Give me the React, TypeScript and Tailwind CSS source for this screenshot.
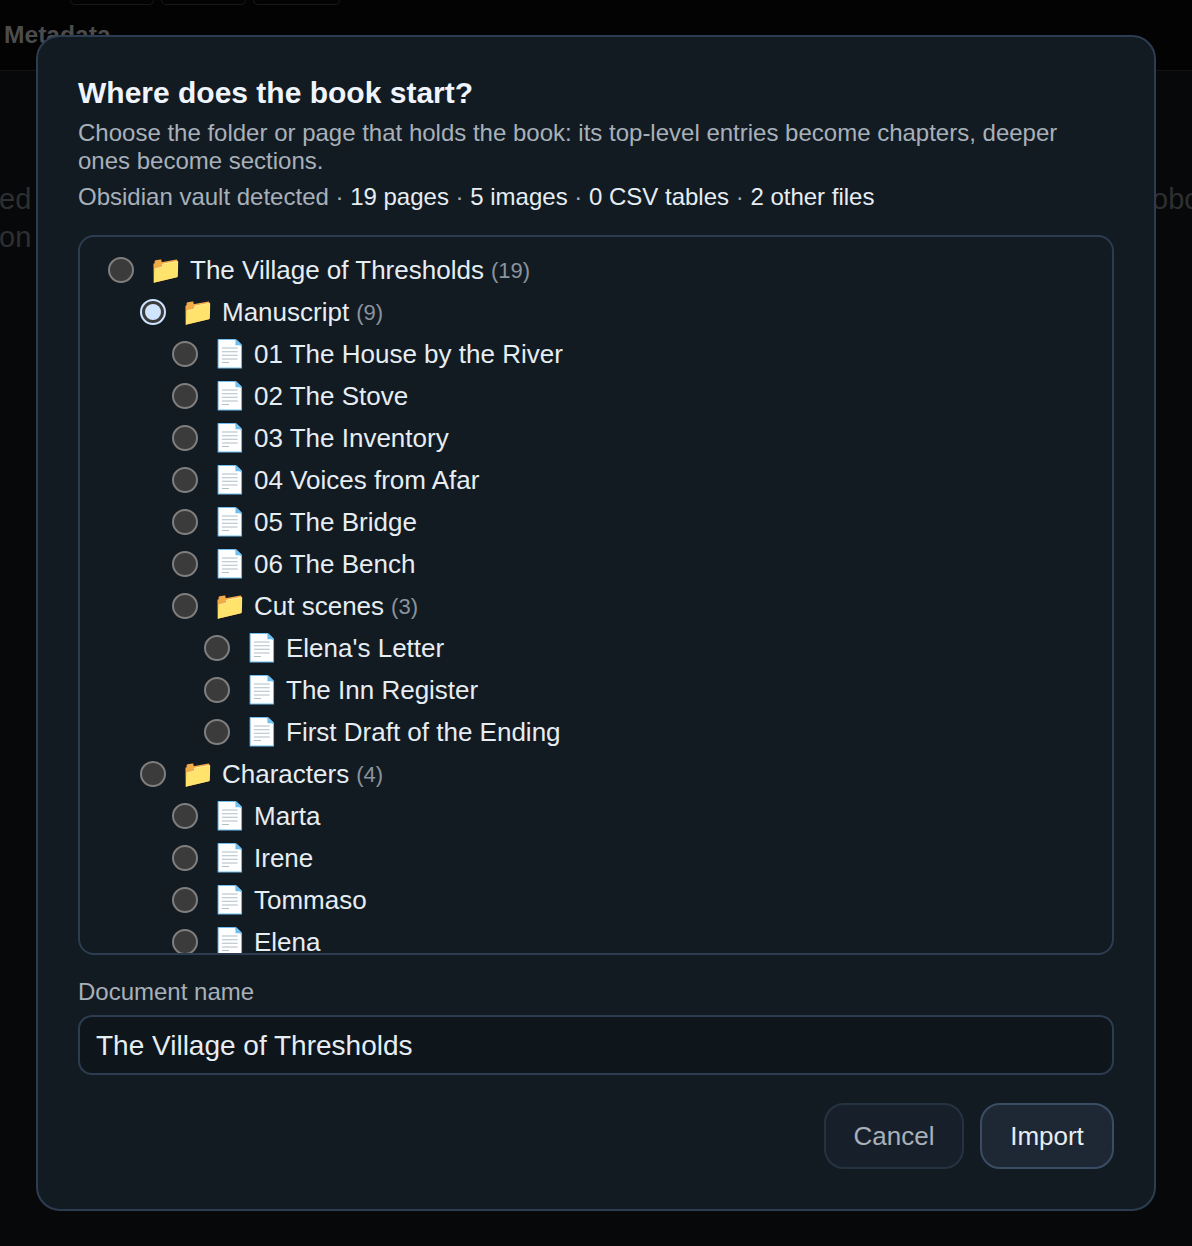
type Node = {
  name: string;
  depth: number;
  folder?: boolean;
  count?: number;
  checked?: boolean;
};

const tree: Node[] = [
  { name: 'The Village of Thresholds', depth: 0, folder: true, count: 19 },
  { name: 'Manuscript', depth: 1, folder: true, count: 9, checked: true },
  { name: '01 The House by the River', depth: 2 },
  { name: '02 The Stove', depth: 2 },
  { name: '03 The Inventory', depth: 2 },
  { name: '04 Voices from Afar', depth: 2 },
  { name: '05 The Bridge', depth: 2 },
  { name: '06 The Bench', depth: 2 },
  { name: 'Cut scenes', depth: 2, folder: true, count: 3 },
  { name: "Elena's Letter", depth: 3 },
  { name: 'The Inn Register', depth: 3 },
  { name: 'First Draft of the Ending', depth: 3 },
  { name: 'Characters', depth: 1, folder: true, count: 4 },
  { name: 'Marta', depth: 2 },
  { name: 'Irene', depth: 2 },
  { name: 'Tommaso', depth: 2 },
  { name: 'Elena', depth: 2 },
];

const indent = ['ml-0', 'ml-[32px]', 'ml-[64px]', 'ml-[96px]'];

function Radio({ checked }: { checked?: boolean }) {
  return (
    <span
      className={`flex h-[26px] w-[26px] shrink-0 items-center justify-center rounded-full border-2 bg-[#3b3b3b] ${
        checked ? 'border-[#cfe4ff]' : 'border-[#7f7f7f]'
      }`}
    >
      {checked && <span className="h-[16px] w-[16px] rounded-full bg-[#cfe4ff]" />}
    </span>
  );
}

function TreeRow({ node }: { node: Node }) {
  return (
    <div className={`flex h-[42px] shrink-0 items-center ${indent[node.depth]}`}>
      <Radio checked={node.checked} />
      <span className="ml-[15px] w-[32px] pt-[1px] text-center text-[27px] leading-none">
        {node.folder ? '📁' : '📄'}
      </span>
      <span className="ml-[9px] text-[26px] text-[#e6edf3]">{node.name}</span>
      {node.count !== undefined && (
        <span className="ml-[7px] text-[22px] text-[#8b949e]">({node.count})</span>
      )}
    </div>
  );
}

function Stat({ children }: { children: string }) {
  return <span className="text-[#e6edf3]">{children}</span>;
}

export default function App() {
  return (
    <div className="relative h-[1246px] w-[1192px] overflow-hidden bg-[#070809] font-['Liberation_Sans',sans-serif]">
      {/* Page behind the dialog */}
      <div className="h-[71px] border-b border-[#111315] bg-[#030304] pl-[4px]">
        <div className="ml-[66px] flex h-[5px] gap-[7px]">
          <div className="h-[5px] w-[84px] rounded-b-[6px] border border-t-0 border-[#16191c]" />
          <div className="h-[5px] w-[85px] rounded-b-[6px] border border-t-0 border-[#16191c]" />
          <div className="h-[5px] w-[87px] rounded-b-[6px] border border-t-0 border-[#16191c]" />
        </div>
        <div className="mt-[14px] text-[24.6px] font-bold leading-[32px] text-[#4c4c4c]">Metadata</div>
      </div>
      <div className="flex justify-between pt-[109px] text-[29px] leading-[38px] text-[#2e2f31]">
        <div className="-ml-[1px]">
          <div>ed</div>
          <div>on</div>
        </div>
        <div className="-mr-[16px] w-[56px]">obo</div>
      </div>

      {/* Dialog */}
      <div className="absolute left-[36px] top-[35px] flex h-[1176px] w-[1120px] flex-col rounded-[24px] border-2 border-[#2c3d52] bg-[#131b22] px-[40px] pt-[39px]">
        <h2 className="text-[30px] font-bold leading-[34px] text-[#f0f4fc]">Where does the book start?</h2>
        <p className="mt-[9px] text-[24px] leading-[28px] text-[#a8b0ba]">
          Choose the folder or page that holds the book: its top-level entries become chapters, deeper ones become sections.
        </p>
        <p className="mt-[8px] text-[24px] leading-[28px] text-[#a8b0ba]">
          Obsidian vault detected · <Stat>19 pages</Stat> · <Stat>5 images</Stat> · <Stat>0 CSV tables</Stat> · <Stat>2 other files</Stat>
        </p>

        <div className="mt-[24px] flex h-[720px] flex-col overflow-hidden rounded-[16px] border-2 border-[#2c3d52] pl-[28px] pt-[12px]">
          {tree.map((node) => (
            <TreeRow key={node.name} node={node} />
          ))}
        </div>

        <label className="mt-[23px] text-[24px] leading-[28px] text-[#a8b0ba]">Document name</label>
        <div className="mt-[9px] flex h-[60px] items-center rounded-[14px] border-2 border-[#2c3d52] bg-[#0e151b] px-[16px] pt-[1px] text-[28px] text-[#e6edf3]">
          The Village of Thresholds
        </div>

        <div className="mt-[28px] flex justify-end gap-[16px]">
          <button className="h-[66px] w-[140px] rounded-[20px] border-2 border-[#243242] bg-[#17202a] text-[26px] text-[#a8b0ba]">
            Cancel
          </button>
          <button className="h-[66px] w-[134px] rounded-[20px] border-2 border-[#3a4d64] bg-[#1e2835] text-[26px] text-[#e6edf3]">
            Import
          </button>
        </div>
      </div>
    </div>
  );
}
